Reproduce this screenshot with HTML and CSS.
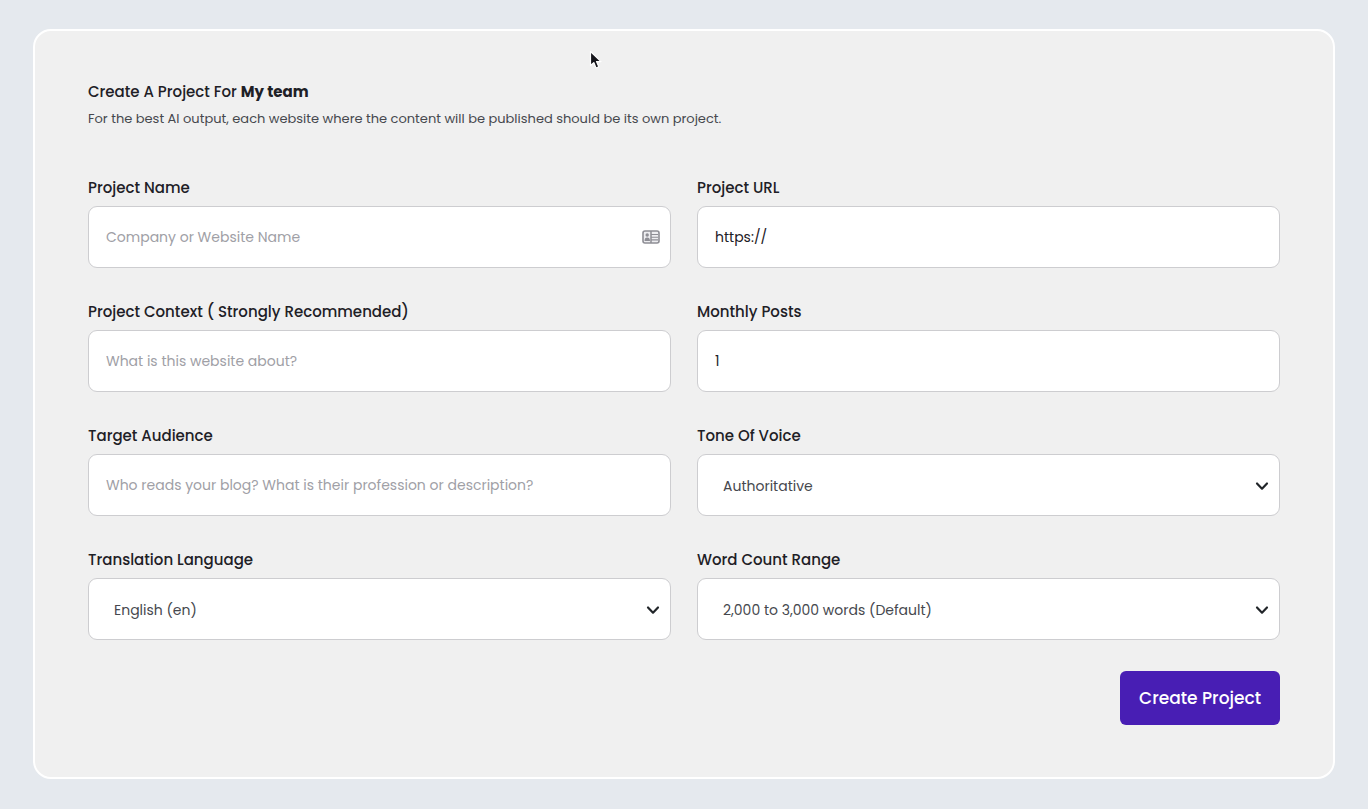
FILE: index.html
```
<!DOCTYPE html>
<html lang="en">
<head>
    <meta charset="UTF-8">
    <meta name="viewport" content="width=device-width, initial-scale=1.0">
    <title>Create Project</title>
    <link rel="stylesheet" href="styles.css">
</head>
<body>
    <main class="card">
        <!-- Heading -->
        <header class="card-header">
            <h1 class="card-title">Create A Project For <strong>My team</strong></h1>
            <p class="card-text">For the best AI output, each website where the content will be published should be its own project.</p>
        </header>

        <!-- Project form -->
        <form class="project-form">
            <div class="form-grid">
                <div class="form-group">
                    <label for="name">Project Name</label>
                    <div class="field">
                        <input type="text" id="name" name="name" placeholder="Company or Website Name">
                        <svg class="field-icon contact-icon" viewBox="0 0 18 14" fill="none" aria-hidden="true">
                            <rect x="1" y="1" width="16" height="12" rx="2" fill="#ededf0" stroke="#8e8e95" stroke-width="1.6"/>
                            <path d="M9 1V13" stroke="#8e8e95" stroke-width="1.5"/>
                            <path d="M9 4.5H16M9 7.2H16M9 9.9H16" stroke="#8e8e95" stroke-width="1.1"/>
                            <circle cx="5.2" cy="5" r="1.7" fill="#8e8e95"/>
                            <path d="M2.5 11C2.5 8.5 3.5 7.5 5.2 7.5S8 8.5 8 11Z" fill="#8e8e95"/>
                        </svg>
                    </div>
                </div>

                <div class="form-group">
                    <label for="url">Project URL</label>
                    <div class="field">
                        <input type="text" id="url" name="url" value="https://">
                    </div>
                </div>

                <div class="form-group">
                    <label for="context">Project Context ( Strongly Recommended)</label>
                    <div class="field">
                        <input type="text" id="context" name="context" placeholder="What is this website about?">
                    </div>
                </div>

                <div class="form-group">
                    <label for="posts">Monthly Posts</label>
                    <div class="field">
                        <input type="text" id="posts" name="posts" inputmode="numeric" value="1">
                    </div>
                </div>

                <div class="form-group">
                    <label for="audience">Target Audience</label>
                    <div class="field">
                        <input type="text" id="audience" name="audience" placeholder="Who reads your blog? What is their profession or description?">
                    </div>
                </div>

                <div class="form-group">
                    <label for="tone">Tone Of Voice</label>
                    <div class="field">
                        <select id="tone" name="tone">
                            <option>Authoritative</option>
                        </select>
                        <svg class="field-icon chevron-icon" viewBox="0 0 14 14" fill="none" aria-hidden="true">
                            <path d="M2 5.5L7 10.7L12 5.5" stroke="#212529" stroke-width="2.2" stroke-linecap="round" stroke-linejoin="round"/>
                        </svg>
                    </div>
                </div>

                <div class="form-group">
                    <label for="language">Translation Language</label>
                    <div class="field">
                        <select id="language" name="language">
                            <option>English (en)</option>
                        </select>
                        <svg class="field-icon chevron-icon" viewBox="0 0 14 14" fill="none" aria-hidden="true">
                            <path d="M2 5.5L7 10.7L12 5.5" stroke="#212529" stroke-width="2.2" stroke-linecap="round" stroke-linejoin="round"/>
                        </svg>
                    </div>
                </div>

                <div class="form-group">
                    <label for="words">Word Count Range</label>
                    <div class="field">
                        <select id="words" name="words">
                            <option>2,000 to 3,000 words (Default)</option>
                        </select>
                        <svg class="field-icon chevron-icon" viewBox="0 0 14 14" fill="none" aria-hidden="true">
                            <path d="M2 5.5L7 10.7L12 5.5" stroke="#212529" stroke-width="2.2" stroke-linecap="round" stroke-linejoin="round"/>
                        </svg>
                    </div>
                </div>
            </div>

            <div class="form-actions">
                <button type="submit" class="btn">Create Project</button>
            </div>
        </form>
    </main>

    <!-- Mouse pointer -->
    <svg class="pointer" viewBox="0 0 14 20" aria-hidden="true">
        <path d="M1.5 1.5V15.5L4.8 12.6L7 18L9.8 16.8L7.5 11.6H12Z" fill="#16161c" stroke="#fff" stroke-width="1.2" stroke-linejoin="round"/>
    </svg>
</body>
</html>
```

FILE: styles.css
```
/* Reset and Base Styles */
* {
    margin: 0;
    padding: 0;
    box-sizing: border-box;
}

:root {
    --page: #e5e9ee;
    --panel: #f0f0f0;
    --white: #ffffff;
    --border: #cdcdd0;
    --ink: #1e2026;
    --muted: #46484e;
    --placeholder: #a0a0a6;
    --purple: #481eb4;
}

body {
    min-height: 100vh;
    padding: 29px 33px;
    background-color: var(--page);
    color: var(--ink);
    font-family: Poppins, Inter, sans-serif;
    font-size: 15px;
}

/* Card */
.card {
    padding: 49px 53px 52px;
    background-color: var(--panel);
    border: 2px solid var(--white);
    border-radius: 18px;
}

.card-header {
    margin-bottom: 46px;
}

.card-title {
    margin-bottom: 4px;
    font-size: 15px;
    font-weight: 500;
    line-height: 24px;
}

.card-title strong {
    font-weight: 700;
}

.card-text {
    color: var(--muted);
    font-size: 13px;
    line-height: 22px;
}

/* Form Styles */
.form-grid {
    display: grid;
    grid-template-columns: 1fr 1fr;
    gap: 32px 26px;
}

.form-group label {
    display: block;
    margin-bottom: 6px;
    font-weight: 500;
    line-height: 24px;
}

.field {
    position: relative;
}

.field input,
.field select {
    display: block;
    width: 100%;
    height: 62px;
    padding: 0 17px;
    background-color: var(--white);
    border: 1px solid var(--border);
    border-radius: 9px;
    color: var(--ink);
    font-family: inherit;
    font-size: 14px;
}

.field select {
    appearance: none;
    padding: 2px 40px 0 25px;
    color: var(--muted);
}

.field input::placeholder {
    color: var(--placeholder);
}

.field-icon {
    position: absolute;
    top: 0;
    right: 11px;
    bottom: 0;
    margin: auto 0;
    pointer-events: none;
}

.contact-icon {
    width: 18px;
    height: 14px;
}

.chevron-icon {
    width: 14px;
    height: 14px;
}

.form-actions {
    display: flex;
    justify-content: flex-end;
    margin-top: 31px;
}

.btn {
    padding: 15px 19px;
    background-color: var(--purple);
    border: none;
    border-radius: 6px;
    color: var(--white);
    font-family: inherit;
    font-size: 17px;
    font-weight: 500;
    line-height: 24px;
    cursor: pointer;
}

/* Pointer */
.pointer {
    position: absolute;
    top: 50px;
    left: 589px;
    width: 14px;
    height: 20px;
}

@media (max-width: 768px) {
    .form-grid {
        grid-template-columns: 1fr;
    }
}
```
